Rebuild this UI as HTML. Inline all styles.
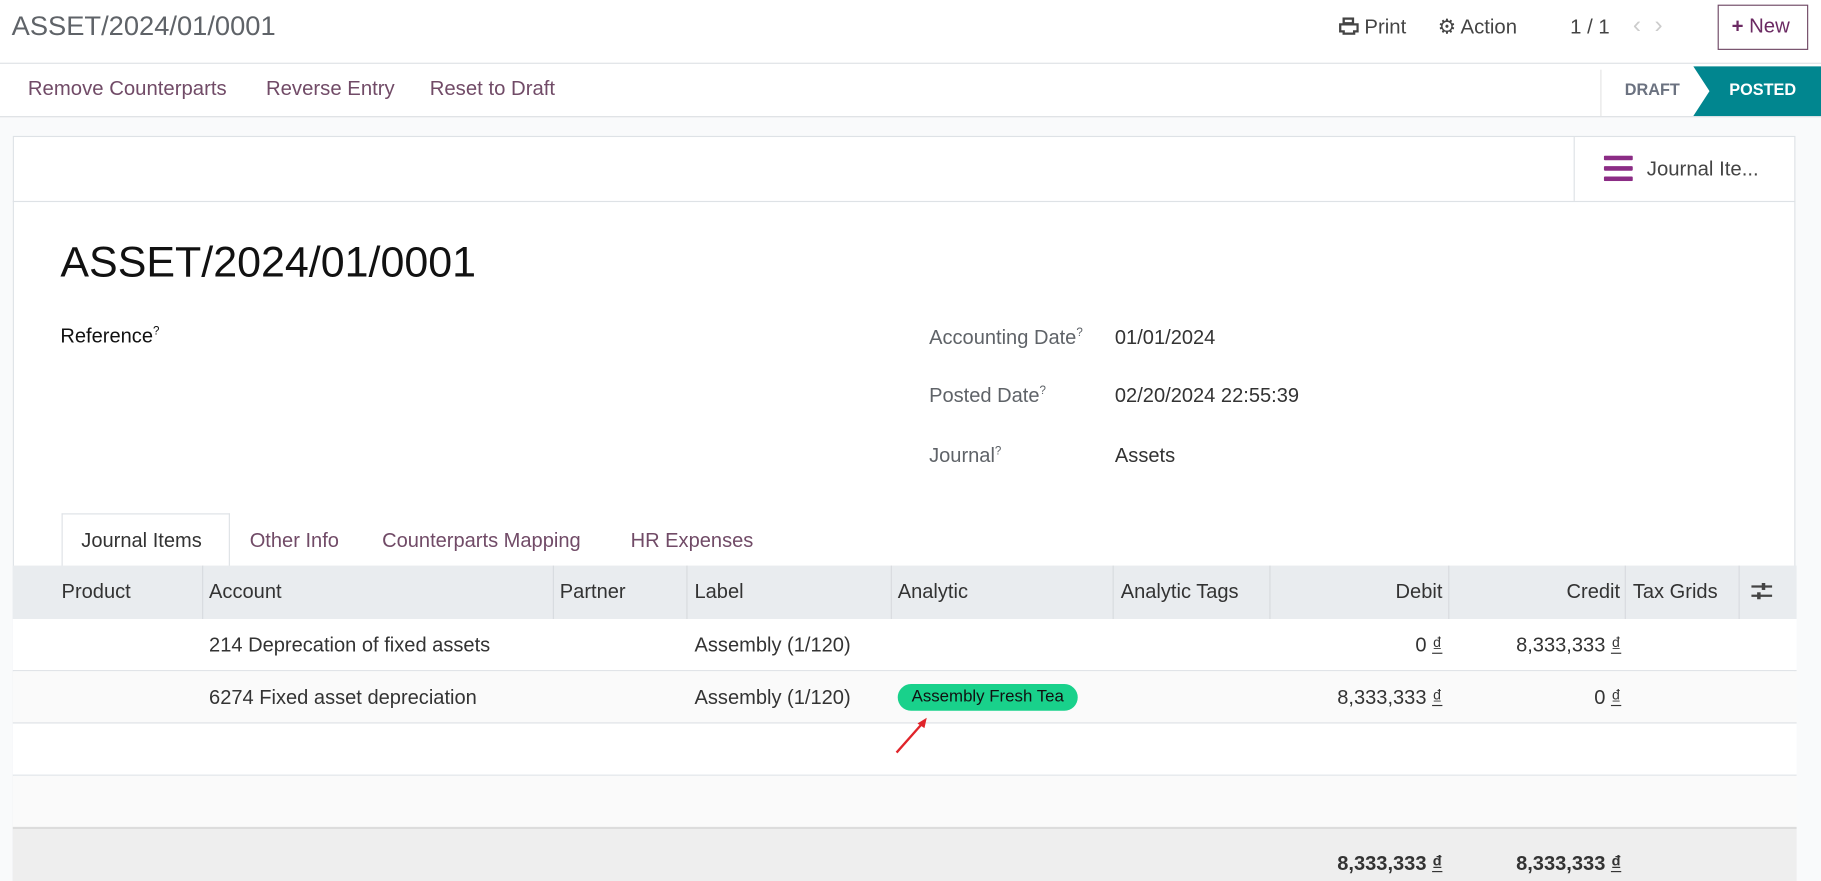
<!DOCTYPE html>
<html><head><meta charset="utf-8"><style>
html,body{margin:0;padding:0;width:1821px;height:881px;overflow:hidden;background:#f9fafb}
#w{position:absolute;left:0;top:0;width:1568px;height:759px;overflow:hidden;transform:scale(1.16135);transform-origin:0 0;font-family:"Liberation Sans",sans-serif;color:#374151;font-size:17.3px}
.a{position:absolute;white-space:nowrap}
.p{color:#714B67}
.l{color:#5f6368}
.hdr{position:absolute;left:11px;top:487px;width:1536px;height:46px;background:#e9ecef}
.row{position:absolute;left:11px;width:1536px;border-bottom:1px solid #dee2e6}
.vl{position:absolute;top:487px;height:46px;width:1px;background:#d8dbdf}
.t{font-size:17.3px;color:#333}
</style></head><body><div id="w">
<div class="a" style="left:0;top:0;width:1568px;height:54px;background:#fff;border-bottom:1px solid #dcdfe3"></div>
<div class="a" style="left:10px;top:9px;font-size:23.5px;color:#5f6368">ASSET/2024/01/0001</div>
<div class="a" style="left:1153px;top:13px;font-size:17.5px;color:#444">
<svg width="17" height="15" viewBox="0 0 17 15" style="vertical-align:-1px"><path d="M4 1h8v4H4z M1 6h15v6h-3v2H4v-2H1z" fill="none" stroke="#444" stroke-width="2"/></svg> Print</div>
<div class="a" style="left:1238px;top:13px;font-size:17.5px;color:#444"><span>⚙</span> Action</div>
<div class="a" style="left:1352px;top:13px;font-size:17.5px;color:#444">1 / 1</div>
<div class="a" style="left:1406px;top:10px;font-size:21px;color:#ccc">‹ &nbsp;›</div>
<div class="a" style="left:1479px;top:4px;width:78px;height:39px;border:1px solid #714B67;box-sizing:border-box;background:#fff"></div>
<div class="a" style="left:1491px;top:12px;font-size:17.5px;color:#6b2a63"><b>+</b> New</div>

<div class="a" style="left:0;top:55px;width:1568px;height:45px;background:#fff;border-bottom:1px solid #dcdfe3"></div>
<div class="a p" style="left:24px;top:66px;font-size:17.5px">Remove Counterparts</div>
<div class="a p" style="left:229px;top:66px;font-size:17.5px">Reverse Entry</div>
<div class="a p" style="left:370px;top:66px;font-size:17.5px">Reset to Draft</div>
<div class="a" style="left:1378px;top:60px;width:1px;height:40px;background:#e4e4e4"></div>
<div class="a" style="left:1399px;top:69px;font-size:14px;font-weight:bold;color:#6b7280">DRAFT</div>
<svg class="a" style="left:1458px;top:57px" width="110" height="43"><path d="M0 0H110V43H0L14 21.5Z" fill="#01868f"/></svg>
<div class="a" style="left:1489px;top:69px;font-size:14px;font-weight:bold;color:#fff">POSTED</div>

<div class="a" style="left:11px;top:117px;width:1535px;height:660px;background:#fff;border:1px solid #dee2e6;box-sizing:border-box"></div>
<div class="a" style="left:11px;top:173px;width:1535px;height:1px;background:#dee2e6"></div>
<div class="a" style="left:1355px;top:118px;width:1px;height:55px;background:#dee2e6"></div>
<svg class="a" style="left:1381px;top:134px" width="25" height="22"><rect y="0" width="25" height="4" rx="1" fill="#8b2c85"/><rect y="9" width="25" height="4" rx="1" fill="#8b2c85"/><rect y="18" width="25" height="4" rx="1" fill="#8b2c85"/></svg>
<div class="a" style="left:1418px;top:135px;font-size:17.5px;color:#444">Journal Ite...</div>

<div class="a" style="left:52px;top:205px;font-size:37px;color:#111">ASSET/2024/01/0001</div>
<div class="a t" style="left:52px;top:279px;color:#111">Reference<sup style="font-size:10px">?</sup></div>
<div class="a l" style="left:800px;top:280px;font-size:17.3px">Accounting Date<sup style="font-size:10px">?</sup></div>
<div class="a t" style="left:960px;top:280px">01/01/2024</div>
<div class="a l" style="left:800px;top:330px;font-size:17.3px">Posted Date<sup style="font-size:10px">?</sup></div>
<div class="a t" style="left:960px;top:330px">02/20/2024 22:55:39</div>
<div class="a l" style="left:800px;top:382px;font-size:17.3px">Journal<sup style="font-size:10px">?</sup></div>
<div class="a t" style="left:960px;top:382px">Assets</div>

<div class="a" style="left:53px;top:442px;width:145px;height:46px;border:1px solid #dee2e6;border-bottom:none;box-sizing:border-box;background:#fff"></div>
<div class="a t" style="left:70px;top:455px">Journal Items</div>
<div class="a p" style="left:215px;top:455px;font-size:17.3px">Other Info</div>
<div class="a p" style="left:329px;top:455px;font-size:17.3px">Counterparts Mapping</div>
<div class="a p" style="left:543px;top:455px;font-size:17.3px">HR Expenses</div>

<div class="hdr"></div>
<div class="vl" style="left:174px"></div><div class="vl" style="left:476px"></div><div class="vl" style="left:591px"></div><div class="vl" style="left:767px"></div><div class="vl" style="left:958px"></div><div class="vl" style="left:1093px"></div><div class="vl" style="left:1247px"></div><div class="vl" style="left:1399px"></div><div class="vl" style="left:1497px"></div>
<div class="a t" style="left:53px;top:499px">Product</div>
<div class="a t" style="left:180px;top:499px">Account</div>
<div class="a t" style="left:482px;top:499px">Partner</div>
<div class="a t" style="left:598px;top:499px">Label</div>
<div class="a t" style="left:773px;top:499px">Analytic</div>
<div class="a t" style="left:965px;top:499px">Analytic Tags</div>
<div class="a t" style="right:326px;top:499px">Debit</div>
<div class="a t" style="right:173px;top:499px">Credit</div>
<div class="a t" style="left:1406px;top:499px">Tax Grids</div>
<svg class="a" style="left:1508px;top:500px" width="18" height="18"><path d="M0 5H18M0 13H18" stroke="#444" stroke-width="2"/><rect x="9" y="2" width="3" height="6" fill="#444"/><rect x="5" y="10" width="3" height="6" fill="#444"/></svg>

<div class="row" style="top:533px;height:44px;background:#fff"></div>
<div class="row" style="top:578px;height:44px;background:#fafafa"></div>
<div class="row" style="top:623px;height:44px;background:#fff"></div>
<div class="row" style="top:668px;height:44px;background:#fafafa;border-bottom:2px solid #dcdcdc"></div>
<div class="row" style="top:714px;height:60px;background:#eeeeee;border:none"></div>

<div class="a t" style="left:180px;top:545px">214 Deprecation of fixed assets</div>
<div class="a t" style="left:598px;top:545px">Assembly (1/120)</div>
<div class="a t" style="right:326px;top:545px">0 <u>₫</u></div>
<div class="a t" style="right:172px;top:545px">8,333,333 <u>₫</u></div>
<div class="a t" style="left:180px;top:590px">6274 Fixed asset depreciation</div>
<div class="a t" style="left:598px;top:590px">Assembly (1/120)</div>
<div class="a" style="left:773px;top:589px;width:155px;height:23px;border-radius:12px;background:#19d18b;font-size:14.5px;color:#111;text-align:center;line-height:23px">Assembly Fresh Tea</div>
<div class="a t" style="right:326px;top:590px">8,333,333 <u>₫</u></div>
<div class="a t" style="right:172px;top:590px">0 <u>₫</u></div>
<svg class="a" style="left:768px;top:614px" width="34" height="38"><path d="M4 34L27 8" stroke="#e0242a" stroke-width="2"/><path d="M30 4L22 9L28 13Z" fill="#e0242a"/></svg>
<div class="a t" style="right:326px;top:733px;font-weight:bold">8,333,333 <u>₫</u></div>
<div class="a t" style="right:172px;top:733px;font-weight:bold">8,333,333 <u>₫</u></div>
</div></body></html>
